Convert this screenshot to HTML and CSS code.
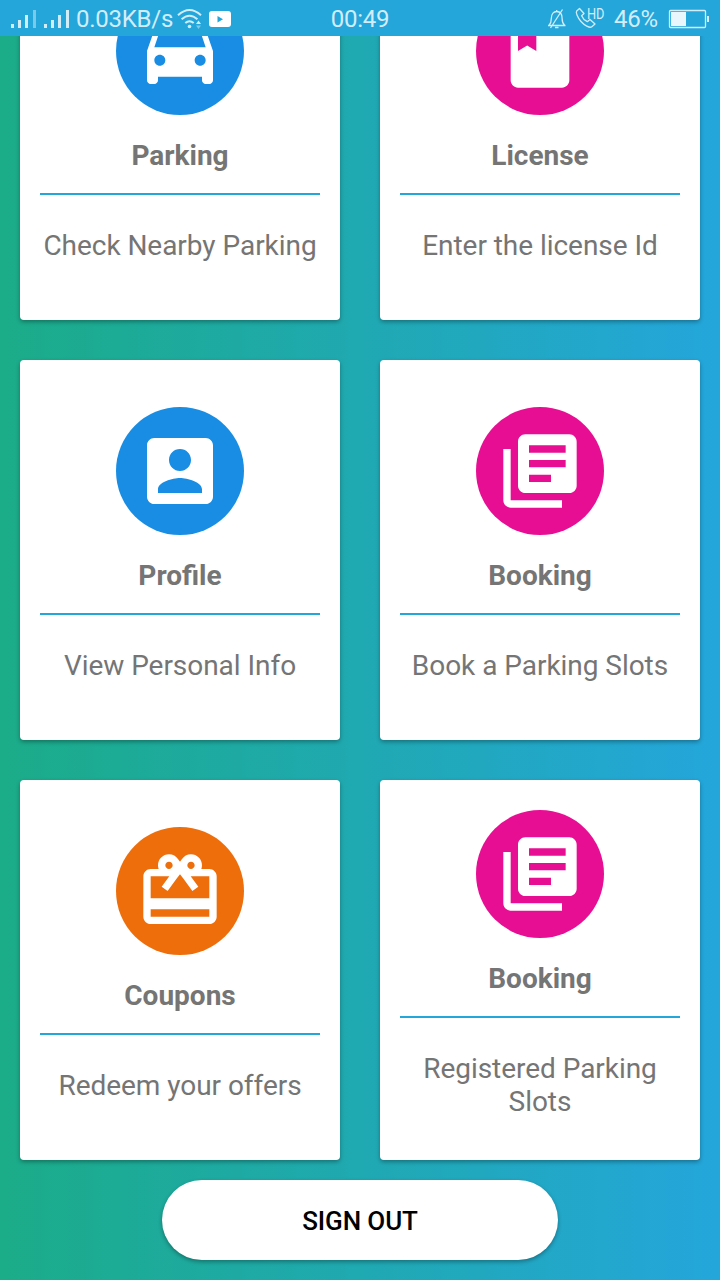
FILE: index.html
```
<!DOCTYPE html>
<html lang="en">
<head>
<meta charset="utf-8">
<title>Parking dashboard</title>
<link rel="stylesheet" href="styles.css">
</head>
<body>
<header class="status">
  <div class="status-left">
    <svg class="signals" width="60" height="18" viewBox="0 0 60 18">
      <path d="M0 14h3v4H0zM7 10h3v8H7zM14 5h3v13h-3zM33 14h3v4h-3zM40 10h3v8h-3zM47 5h3v13h-3zM55 0h3v18h-3z"/>
      <path class="faint" d="M22 0h3v18h-3z"/>
    </svg>
    <span class="speed">0.03KB/s</span>
    <svg class="wifi" width="26" height="20" viewBox="0 0 26 20">
      <path class="stroke" d="M1 6.2Q12.5-4.2 24 6.2M4.6 10.2Q12.5 3.2 20.4 10.2M8.3 14Q12.5 10.4 16.7 14"/>
      <circle cx="12.5" cy="17.5" r="1.8"/>
      <path d="M19 15l2.5-3.5L24 15z"/>
      <path class="faint" d="M19 16.5h5L21.500 20z"/>
    </svg>
    <svg class="video" width="22" height="16" viewBox="0 0 22 16">
      <rect width="22" height="16" rx="3" fill="#fff"/>
      <path d="M8.500 5v6.500l5.500-3.250z" fill="#24a6db"/>
    </svg>
  </div>
  <time class="clock">00:49</time>
  <div class="status-right">
    <svg class="bell" width="20" height="20" viewBox="0 0 20 20">
      <path class="stroke thin" d="M1 16.500h17.500M2 16.500c2-2 2.300-4 2.300-7C4.300 5 6.500 2.500 9.700 2.500s5.400 2.500 5.400 7c0 3 .4 5 2.600 7M9.700 2.500V1M8 18.500h3.500M3.500 19L15.500.5"/>
    </svg>
    <svg class="call" width="30" height="22" viewBox="0 0 30 22">
      <path class="stroke thin" d="M4.500 2.500L1.700 5C.5 6.500 2.500 11.500 6 15.500s8.500 6.500 10.500 5.500l3.500-3-5-4.500-2.700 2.200C10 14.500 7.600 12.200 6.600 9.700L9 7.500z"/>
      <text class="hd" x="12" y="12.500" textLength="17.500" lengthAdjust="spacingAndGlyphs">HD</text>
    </svg>
    <span class="percent">46%</span>
    <svg class="battery" width="40" height="18" viewBox="0 0 40 18">
      <rect class="stroke thin" x=".5" y=".5" width="36" height="17" rx="1"/>
      <path d="M38 6h2v6h-2z"/>
      <path class="charge" d="M2 2h15v14H2z"/>
    </svg>
  </div>
</header>

<main class="screen">
  <section class="grid">
    <article class="card">
      <div class="badge blue"><svg viewBox="0 0 24 24"><path d="M18.92 6.010C18.720 5.420 18.160 5 17.500 5h-11c-.66 0-1.210.42-1.420 1.010L3 12v8c0 .55.45 1 1 1h1c.55 0 1-.45 1-1v-1h12v1c0 .55.45 1 1 1h1c.55 0 1-.45 1-1v-8l-2.080-5.990zM6.500 16c-.83 0-1.500-.67-1.500-1.500S5.670 13 6.500 13s1.500.67 1.500 1.500S7.330 16 6.500 16zm11 0c-.83 0-1.500-.67-1.500-1.500s.67-1.500 1.500-1.500 1.500.67 1.500 1.500-.67 1.500-1.500 1.500zM5 11l1.500-4.500h11L19 11H5z"/></svg></div>
      <h2 class="title">Parking</h2>
      <hr class="rule">
      <p class="text">Check Nearby Parking</p>
    </article>
    <article class="card">
      <div class="badge pink"><svg viewBox="0 0 24 24"><path d="M18 2H6c-1.100 0-2 .9-2 2v16c0 1.100.9 2 2 2h12c1.100 0 2-.9 2-2V4c0-1.100-.9-2-2-2zM6 4h5v8l-2.500-1.500L6 12V4z"/></svg></div>
      <h2 class="title">License</h2>
      <hr class="rule">
      <p class="text">Enter the license Id</p>
    </article>
    <article class="card">
      <div class="badge blue"><svg viewBox="0 0 24 24"><path d="M3 5v14c0 1.100.89 2 2 2h14c1.100 0 2-.9 2-2V5c0-1.100-.9-2-2-2H5c-1.110 0-2 .9-2 2zm12 4c0 1.660-1.340 3-3 3s-3-1.340-3-3 1.340-3 3-3 3 1.340 3 3zm-9 8c0-2 4-3.100 6-3.100s6 1.100 6 3.100v1H6v-1z"/></svg></div>
      <h2 class="title">Profile</h2>
      <hr class="rule">
      <p class="text">View Personal Info</p>
    </article>
    <article class="card">
      <div class="badge pink"><svg viewBox="0 0 24 24"><path d="M4 6H2v14c0 1.100.9 2 2 2h14v-2H4V6zm16-4H8c-1.100 0-2 .9-2 2v12c0 1.100.9 2 2 2h12c1.100 0 2-.9 2-2V4c0-1.100-.9-2-2-2zm-1 5H9V5h10v2zm0 4H9V9h10v2zm-4 4H9v-2h6v2z"/></svg></div>
      <h2 class="title">Booking</h2>
      <hr class="rule">
      <p class="text">Book a Parking Slots</p>
    </article>
    <article class="card">
      <div class="badge orange"><svg viewBox="0 0 24 24"><path d="M20 6h-2.180c.11-.31.18-.65.18-1 0-1.660-1.340-3-3-3-1.050 0-1.960.54-2.500 1.350l-.5.67-.5-.68C10.960 2.540 10.050 2 9 2 7.340 2 6 3.340 6 5c0 .35.07.69.18 1H4c-1.110 0-1.990.89-1.990 2L2 19c0 1.110.89 2 2 2h16c1.110 0 2-.89 2-2V8c0-1.110-.89-2-2-2zm-5-2c.55 0 1 .45 1 1s-.45 1-1 1-1-.45-1-1 .45-1 1-1zM9 4c.55 0 1 .45 1 1s-.45 1-1 1-1-.45-1-1 .45-1 1-1zm11 15H4v-2h16v2zm0-5H4V8h5.080L7 10.830 8.620 12 11 8.760l1-1.360 1 1.360L15.380 12 17 10.830 14.920 8H20v6z"/></svg></div>
      <h2 class="title">Coupons</h2>
      <hr class="rule">
      <p class="text">Redeem your offers</p>
    </article>
    <article class="card two-line">
      <div class="badge pink"><svg viewBox="0 0 24 24"><path d="M4 6H2v14c0 1.100.9 2 2 2h14v-2H4V6zm16-4H8c-1.100 0-2 .9-2 2v12c0 1.100.9 2 2 2h12c1.100 0 2-.9 2-2V4c0-1.100-.9-2-2-2zm-1 5H9V5h10v2zm0 4H9V9h10v2zm-4 4H9v-2h6v2z"/></svg></div>
      <h2 class="title">Booking</h2>
      <hr class="rule">
      <p class="text">Registered Parking Slots</p>
    </article>
  </section>
  <button class="signout" type="button">SIGN OUT</button>
</main>
</body>
</html>
```
FILE: styles.css
```
* { box-sizing: border-box; }

body {
  margin: 0;
  width: 720px;
  height: 1280px;
  overflow: hidden;
  display: flex;
  flex-direction: column;
  font-family: Roboto, "Noto Sans", sans-serif;
  background: linear-gradient(90deg, #1bac88, #24a6db);
}

/* Status bar */
.status {
  flex: none;
  display: grid;
  grid-template-columns: 1fr auto 1fr;
  align-items: center;
  height: 36px;
  padding: 0 11px;
  background: #24a6db;
  color: #d3edf8;
  font-size: 24px;
  line-height: 36px;
}
.status svg { display: block; fill: #d3edf8; overflow: visible; }
.status .stroke { fill: none; stroke: #d3edf8; stroke-width: 2; }
.status .thin { stroke-width: 1.3; stroke-linejoin: round; }
.status .faint { opacity: .5; }
.status .charge { fill: #e9f6fc; }
.status-left, .status-right { display: flex; align-items: center; }
.status-right { justify-content: flex-end; }
.speed { width: 97px; margin-left: 5px; padding-top: 1px; letter-spacing: -.25px; }
.clock { padding-top: 1px; letter-spacing: -.3px; }
.wifi { margin-left: 4px; }
.video { margin-left: 6px; }
.call { margin: -3px 0 0 8px; }
.hd { font-size: 15px; }
.percent { margin: 0 11px 0 9px; padding-top: 1px; letter-spacing: -.2px; }

/* Scrolled content */
.screen {
  flex: 1;
  min-height: 0;
  overflow: hidden;
  display: flex;
  flex-direction: column;
  align-items: center;
}
.grid {
  flex: none;
  display: grid;
  grid-template-columns: 320px 320px;
  grid-auto-rows: 380px;
  gap: 40px;
  margin-top: -96px;
}
.card {
  display: flex;
  flex-direction: column;
  align-items: center;
  justify-content: center;
  padding: 0 20px;
  border-radius: 4px;
  background: #fff;
  box-shadow: 0 2px 4px rgba(0, 0, 0, .32);
  color: #757575;
  text-align: center;
}
.two-line { padding-bottom: 1px; }
.badge {
  flex: none;
  display: flex;
  align-items: center;
  justify-content: center;
  width: 128px;
  height: 128px;
  border-radius: 50%;
}
.badge svg { width: 88px; height: 88px; fill: #fff; }
.blue { background: #188de3; }
.pink { background: #e70e94; }
.orange { background: #ed6e0b; }
.title { margin: 24px 0 0; font-size: 28px; line-height: 33px; font-weight: 700; }
.rule { width: 280px; height: 2px; margin: 21px 0 0; border: 0; background: #24a6db; }
.text { margin: 34px 0 0; padding-bottom: 11px; font-size: 28px; line-height: 33px; letter-spacing: -.04px; }

.signout {
  flex: none;
  width: 396px;
  height: 80px;
  margin-top: 20px;
  padding: 2px 0 0;
  border: 0;
  border-radius: 40px;
  background: #fff;
  box-shadow: 0 2px 4px rgba(0, 0, 0, .32);
  color: #000;
  font: 500 26px/33px Roboto, "Noto Sans", sans-serif;
  letter-spacing: -.1px;
}
```
